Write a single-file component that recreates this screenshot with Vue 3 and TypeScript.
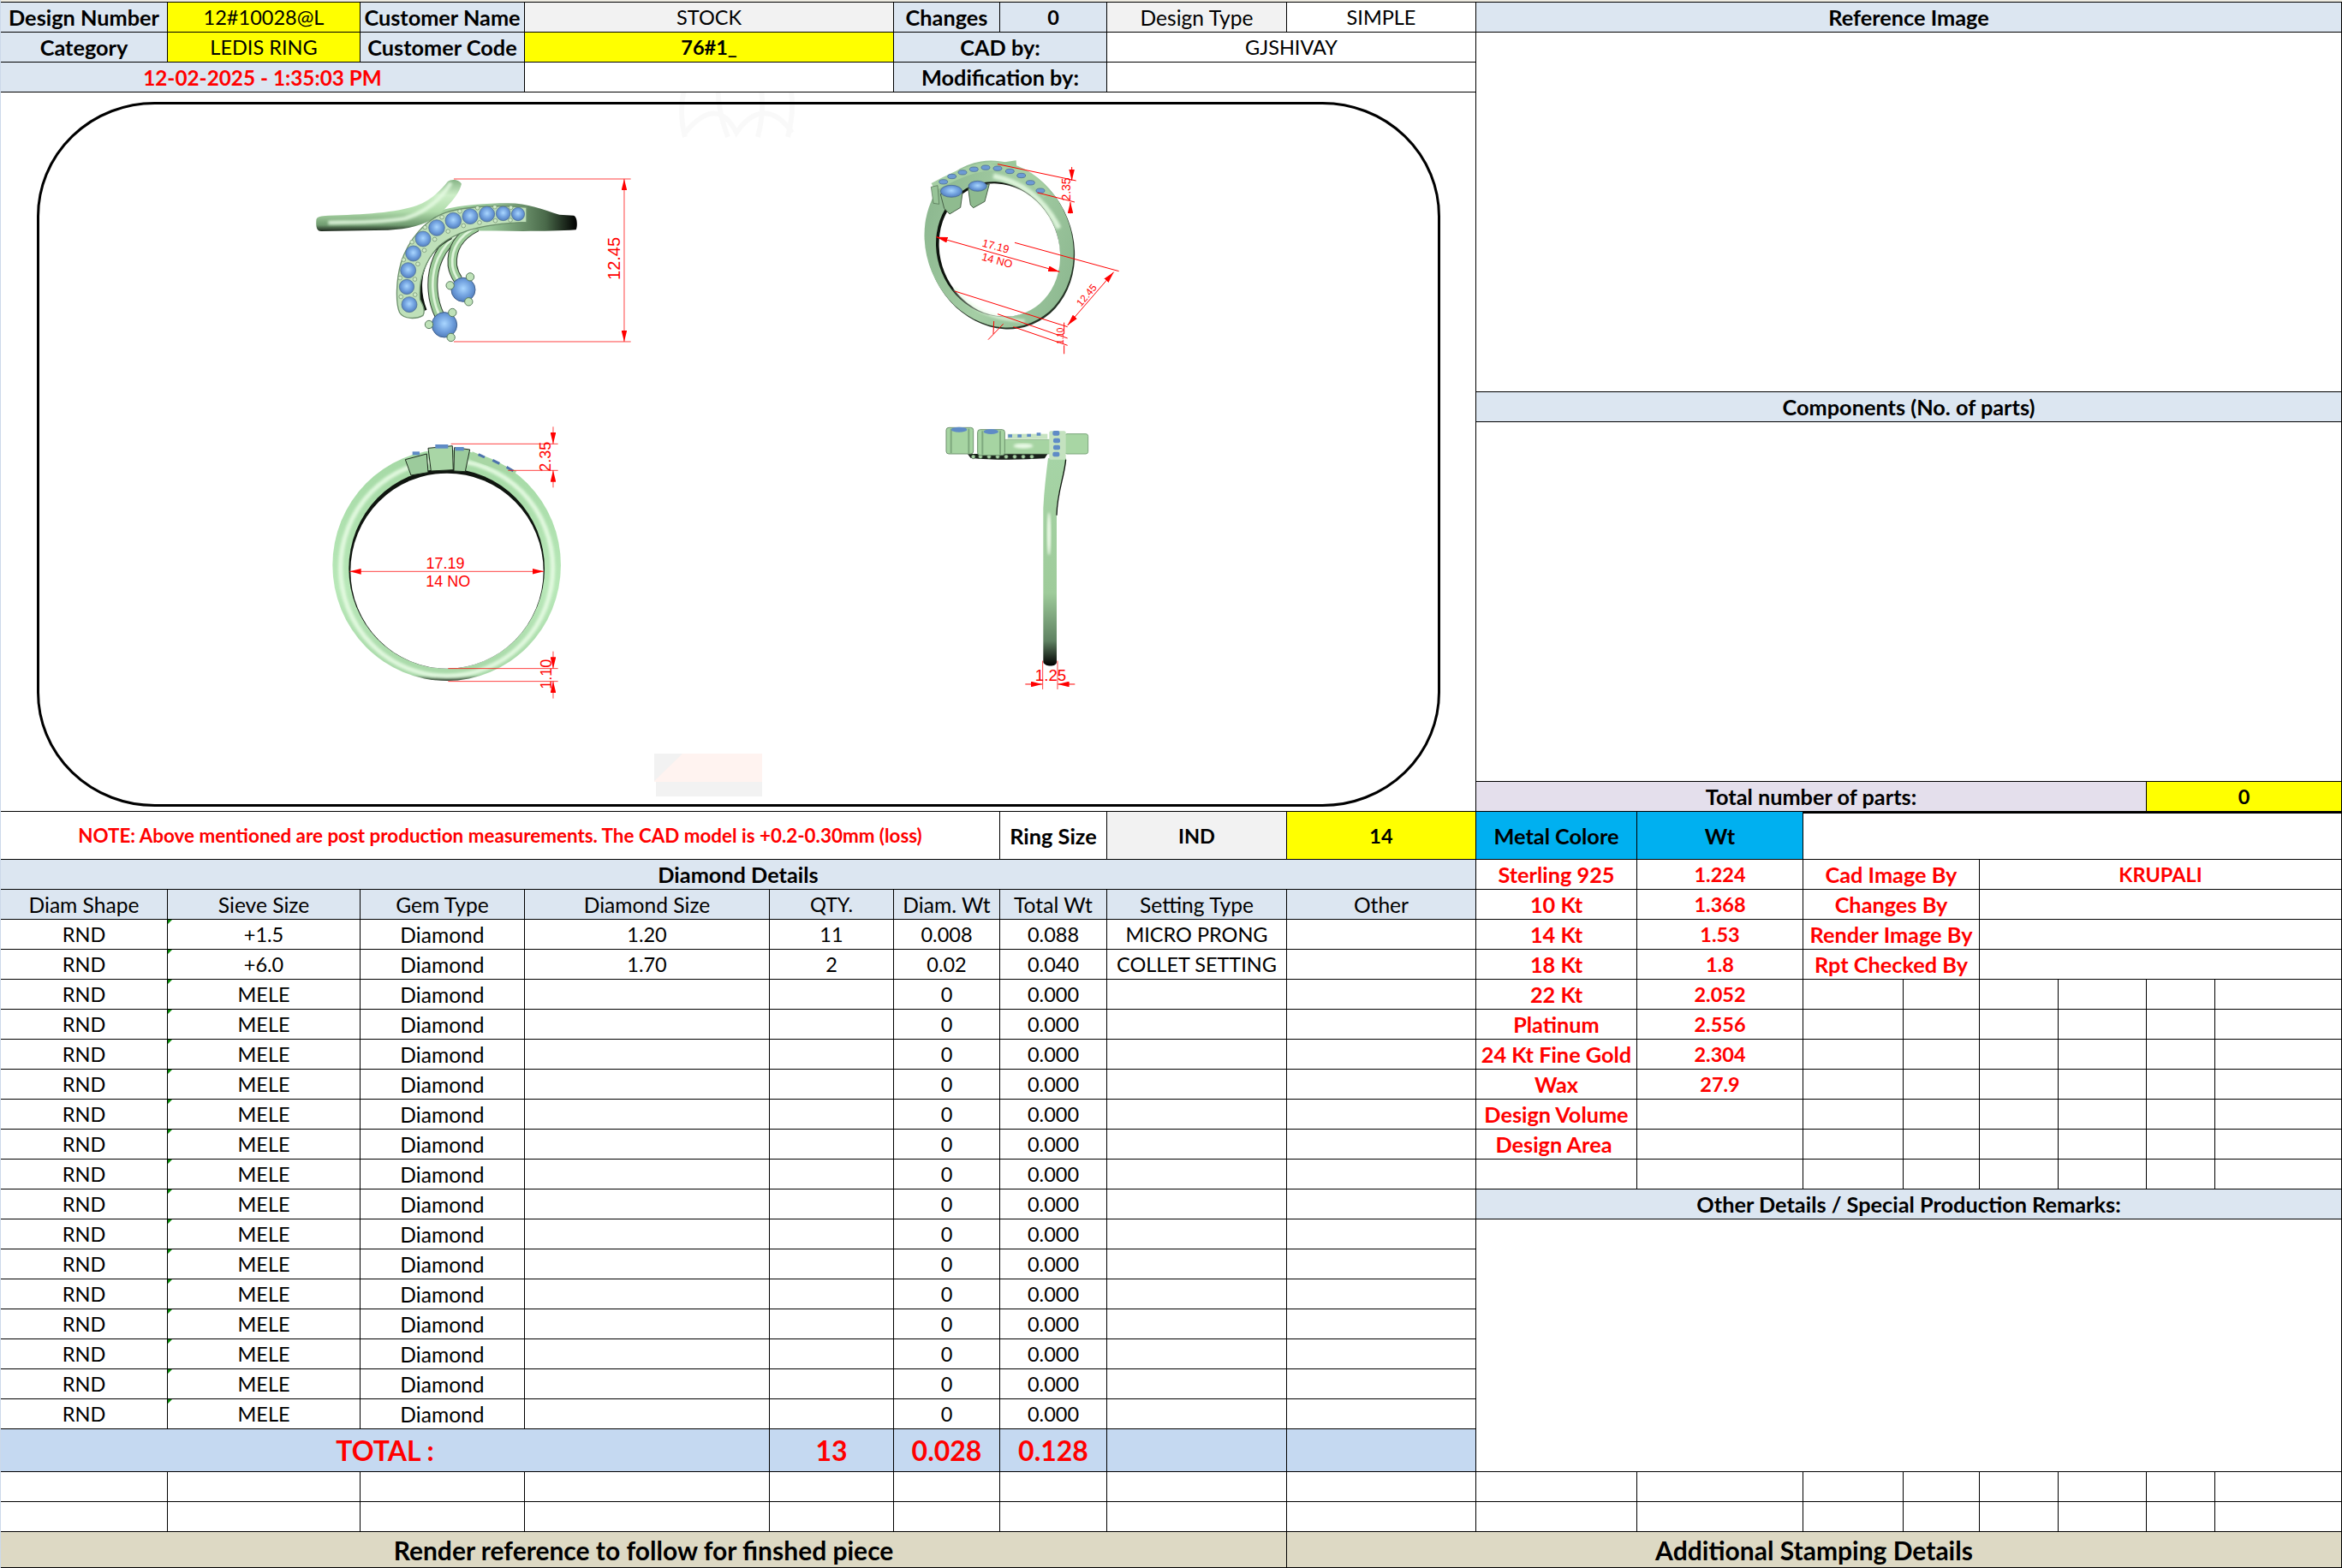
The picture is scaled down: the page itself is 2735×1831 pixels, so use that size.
<script setup lang="ts">
import { computed } from 'vue'

type Cell = { t?: string; col: number; row: number; c?: number; r?: number; k?: string; mark?: boolean }

const cells: Cell[] = []
const add = (row: number, col: number, t = '', k = '', c = 1, r = 1, mark = false) => {
  cells.push({ row, col, t, k: /[a-z]/.test(t) ? `${k} lc` : k, c, r, mark })
}

// Header block
add(1, 1, 'Design Number', 'h b')
add(1, 2, '12#10028@L', 'y')
add(1, 3, 'Customer Name', 'h b')
add(1, 4, 'STOCK', 'g', 2)
add(1, 6, 'Changes', 'h b')
add(1, 7, '0', 'h b')
add(1, 8, 'Design Type', 'g')
add(1, 9, 'SIMPLE')
add(1, 10, 'Reference Image', 'h b', 8)
add(2, 1, 'Category', 'h b')
add(2, 2, 'LEDIS RING', 'y')
add(2, 3, 'Customer Code', 'h b')
add(2, 4, '76#1_', 'y b', 2)
add(2, 6, 'CAD by:', 'h b', 2)
add(2, 8, 'GJSHIVAY', '', 2)
add(2, 10, '', '', 8, 3)
add(3, 1, '12-02-2025 - 1:35:03 PM', 'h b red date', 3)
add(3, 4, '', '', 2)
add(3, 6, 'Modification by:', 'h b', 2)
add(3, 8, '', '', 2)
add(5, 10, 'Components (No. of parts)', 'h b', 8)
add(6, 10, '', '', 8)
add(7, 10, 'Total number of parts:', 'lav b', 6)
add(7, 16, '0', 'y b', 2)

// Note row
add(8, 1, 'NOTE: Above mentioned are post production measurements. The CAD model is +0.2-0.30mm (loss)', 'b red note', 6)
add(8, 7, 'Ring Size', 'b')
add(8, 8, 'IND', 'g b')
add(8, 9, '14', 'y b')
add(8, 10, 'Metal Colore', 'cyan b')
add(8, 11, 'Wt', 'cyan b')
add(8, 12, '', 'thick', 6)

// Diamond table
add(9, 1, 'Diamond Details', 'h b', 9)
;['Diam Shape', 'Sieve Size', 'Gem Type', 'Diamond Size', 'QTY.', 'Diam. Wt', 'Total Wt', 'Setting Type', 'Other'].forEach((t, i) =>
  add(10, i + 1, t, 'h')
)
const rows = [
  ['RND', '+1.5', 'Diamond', '1.20', '11', '0.008', '0.088', 'MICRO PRONG', ''],
  ['RND', '+6.0', 'Diamond', '1.70', '2', '0.02', '0.040', 'COLLET SETTING', '']
]
for (let i = 0; i < 15; i++) rows.push(['RND', 'MELE', 'Diamond', '', '', '0', '0.000', '', ''])
rows.forEach((r, ri) => r.forEach((t, ci) => add(11 + ri, ci + 1, t, '', 1, 1, ci === 1)))

add(28, 1, 'TOTAL :', 'tot', 4)
add(28, 5, '13', 'tot')
add(28, 6, '0.028', 'tot')
add(28, 7, '0.128', 'tot')
add(28, 8, '', 'totb')
add(28, 9, '', 'totb')

// Metal table
const metals = [
  ['Sterling 925', '1.224'], ['10 Kt', '1.368'], ['14 Kt', '1.53'], ['18 Kt', '1.8'], ['22 Kt', '2.052'],
  ['Platinum', '2.556'], ['24 Kt Fine Gold', '2.304'], ['Wax', '27.9'], ['Design Volume', ''], ['Design Area', ''], ['', '']
]
metals.forEach((m, i) => {
  add(9 + i, 10, m[0], m[0] === 'Design Area' ? 'b red off' : 'b red')
  add(9 + i, 11, m[1], 'b red')
})
;['Cad Image By', 'Changes By', 'Render Image By', 'Rpt Checked By'].forEach((t, i) => {
  add(9 + i, 12, t, 'b red', 2)
  add(9 + i, 14, i === 0 ? 'KRUPALI' : '', 'b red', 4)
})
for (let r = 13; r <= 19; r++) for (let c = 12; c <= 17; c++) add(r, c)
add(20, 10, 'Other Details / Special Production Remarks:', 'h b', 8)
add(21, 10, '', '', 8, 8)

for (let r = 29; r <= 30; r++) for (let c = 1; c <= 17; c++) add(r, c)
add(31, 1, 'Render reference to follow for finshed piece', 'sand', 8)
add(31, 9, 'Additional Stamping Details', 'sand', 9)

const cellPos = (x: Cell) => ({
  gridColumn: `${x.col} / span ${x.c}`,
  gridRow: `${x.row} / span ${x.r}`
})

// Stones along the pave arm of the top-left view
const pave = [
  [795, 210, 23], [743, 208, 25], [686, 210, 27], [627, 218, 27], [568, 233, 28], [510, 258, 28],
  [462, 297, 27], [428, 348, 27], [410, 407, 27], [405, 465, 26], [414, 527, 27]
]
const paveProngs = computed(() => {
  const out: number[][] = []
  for (let i = 0; i < pave.length - 1; i++) {
    const [x1, y1, r1] = pave[i]
    const [x2, y2] = pave[i + 1]
    const dx = x2 - x1
    const dy = y2 - y1
    const len = Math.hypot(dx, dy)
    const mx = (x1 + x2) / 2
    const my = (y1 + y2) / 2
    const d = r1 - 1
    out.push([mx - (dy / len) * d, my + (dx / len) * d])
    out.push([mx + (dy / len) * d, my - (dx / len) * d])
  }
  return out
})
const bigProngs = [[627, 430], [557, 460], [622, 517], [565, 555], [483, 597], [560, 642]]
const perspStones = [[185, 157], [215, 138], [252, 124], [292, 113], [333, 107], [375, 110], [418, 120], [458, 135], [490, 160], [525, 188]]
const sideDots = [170, 195, 225, 255, 285, 315, 345, 375]
const sidePave = [[460, 78], [462, 104], [462, 128], [460, 152]]
</script>

<template>
  <div class="sheet">
    <div class="grid">
      <div v-for="(x, i) in cells" :key="i" class="cell" :class="x.k" :style="cellPos(x)">
        <i v-if="x.mark" class="mark"></i>{{ x.t }}
      </div>

      <div class="cell canvas">
        <svg viewBox="1 108 1722 839" preserveAspectRatio="none">
          <defs>
            <linearGradient id="bandL" x1="0" y1="0" x2="0" y2="1">
              <stop offset="0" stop-color="#86b486" />
              <stop offset=".3" stop-color="#cdeec8" />
              <stop offset=".62" stop-color="#b0dcab" />
              <stop offset=".88" stop-color="#6f9a6f" />
              <stop offset="1" stop-color="#1c261c" />
            </linearGradient>
            <linearGradient id="bandR" x1="0" y1="0" x2="1" y2="0">
              <stop offset="0" stop-color="#a8d6a4" />
              <stop offset=".45" stop-color="#98c698" />
              <stop offset=".8" stop-color="#4a6a4a" />
              <stop offset="1" stop-color="#000" />
            </linearGradient>
            <radialGradient id="stone" cx=".5" cy=".45" r=".6">
              <stop offset="0" stop-color="#a9d6ff" />
              <stop offset=".55" stop-color="#6f9fdd" />
              <stop offset="1" stop-color="#4c76b4" />
            </radialGradient>
            <linearGradient id="tilt" x1="0" y1="0" x2="1" y2="1">
              <stop offset="0" stop-color="#84b088" />
              <stop offset=".5" stop-color="#a5cea5" />
              <stop offset="1" stop-color="#86b28a" />
            </linearGradient>
            <linearGradient id="front" x1="0" y1="0" x2="0" y2="1">
              <stop offset="0" stop-color="#a4d8a4" />
              <stop offset=".6" stop-color="#b8e8b8" />
              <stop offset=".975" stop-color="#a8d8a8" />
              <stop offset="1" stop-color="#2e3e2e" />
            </linearGradient>
            <linearGradient id="stem" x1="0" y1="0" x2="0" y2="1">
              <stop offset="0" stop-color="#a6d4a6" />
              <stop offset=".65" stop-color="#9ecb9a" />
              <stop offset=".88" stop-color="#5f8262" />
              <stop offset="1" stop-color="#000" />
            </linearGradient>
            <filter id="soft"><feGaussianBlur stdDeviation="5" /></filter>
            <marker id="arr" markerUnits="userSpaceOnUse" markerWidth="40" markerHeight="20" refX="40" refY="10" orient="auto-start-reverse">
              <path d="M0 0 L40 10 L0 20 Z" fill="#f00" />
            </marker>
          </defs>

          <!-- faint print-through from the source sheet -->
          <g opacity=".025" fill="none" stroke="#333" stroke-width="6">
            <path d="M800 160 C790 120 800 85 820 75 M850 160 C835 120 835 90 850 75 M920 160 C930 120 925 85 905 75 M885 160 C895 120 890 90 875 75" />
            <path d="M800 155 C825 125 845 125 860 155 C880 125 905 125 925 155" />
          </g>
          <rect x="764" y="880" width="126" height="33" fill="#fff3f0" />
          <rect x="766" y="913" width="124" height="17" fill="#f2f2f2" />
          <path d="M764 880 H797 L764 912 Z" fill="#f2f2f2" />

          <rect class="frame" x="44.5" y="120.5" width="1636" height="820" rx="136" ry="132" />

          <!-- top-left view -->
          <g transform="translate(340 180) scale(.3333)">
            <path d="M530 195 C600 178 680 172 760 172 C830 172 880 195 940 212 L990 215 C1003 218 1004 255 998 265 C900 272 760 270 620 268 L450 268 Z" fill="url(#bandR)" />
            <path d="M88 232 C88 220 100 216 130 215 C250 212 370 205 440 180 C490 162 525 125 548 97 C560 85 590 88 597 104 C590 135 565 165 535 195 C495 240 430 262 340 266 L105 270 C92 270 86 260 88 232 Z" fill="url(#bandL)" />
            <path d="M560 100 C530 150 480 200 400 225 C320 240 220 238 130 240" class="hi" stroke-width="14" />
            <g fill="none">
              <path d="M590 278 C520 320 490 400 497 480 C500 520 510 545 520 565" stroke="#2b3a2b" stroke-width="36" />
              <path d="M590 278 C520 320 490 400 497 480 C500 520 510 545 520 565" stroke="#9ccb99" stroke-width="30" />
              <path d="M590 278 C520 320 490 400 497 480 C500 520 510 545 520 565" stroke="#def4da" stroke-width="8" />
              <path d="M650 255 C590 285 560 330 565 390 C568 410 575 425 585 440" stroke="#2b3a2b" stroke-width="34" />
              <path d="M650 255 C590 285 560 330 565 390 C568 410 575 425 585 440" stroke="#9ccb99" stroke-width="28" />
              <path d="M650 255 C590 285 560 330 565 390 C568 410 575 425 585 440" stroke="#def4da" stroke-width="8" />
              <path d="M468 548 C445 490 440 410 490 345 C510 320 530 305 560 290" stroke="#0c120c" stroke-width="16" />
            </g>
            <path d="M825 186 C740 180 620 180 540 205 C470 230 410 300 385 380 C368 440 365 520 380 555 C395 580 440 578 462 565 C472 545 460 525 452 510 C445 440 470 370 520 320 C570 280 640 245 825 238 Z" fill="#bfe0b9" stroke="#6d916d" stroke-width="4" />
            <circle v-for="(s, i) in pave" :key="'s' + i" :cx="s[0]" :cy="s[1]" :r="s[2]" fill="url(#stone)" stroke="#47688f" stroke-width="2" />
            <circle v-for="(p, i) in paveProngs" :key="'p' + i" :cx="p[0]" :cy="p[1]" r="7" fill="#cfeac8" stroke="#6a8a6a" stroke-width="2" />
            <circle cx="603" cy="475" r="42" fill="url(#stone)" stroke="#3f5f8c" stroke-width="3" />
            <circle cx="537" cy="598" r="44" fill="url(#stone)" stroke="#3f5f8c" stroke-width="3" />
            <circle v-for="(p, i) in bigProngs" :key="'b' + i" :cx="p[0]" :cy="p[1]" r="14" fill="#bfe2b9" stroke="#55795a" stroke-width="3" />
            <g class="dim soft">
              <path d="M570 87 H1190 M570 657 H1190" />
              <path d="M1167 87 V657" marker-start="url(#arr)" marker-end="url(#arr)" />
            </g>
            <text class="dt" transform="translate(1153 366) rotate(-90)" text-anchor="middle" font-size="60">12.45</text>
          </g>

          <!-- top-right view -->
          <g transform="translate(1040 160) scale(.3333)">
            <ellipse cx="384" cy="381" rx="255" ry="298" transform="rotate(-22 384 381)" fill="#263326" />
            <ellipse cx="380" cy="375" rx="255" ry="298" transform="rotate(-22 380 375)" fill="url(#tilt)" />
            <ellipse cx="376" cy="393" rx="213" ry="240" transform="rotate(-22 376 393)" fill="#0e140e" />
            <ellipse cx="382" cy="396" rx="208" ry="237" transform="rotate(-22 382 396)" fill="#fff" />
            <path d="M360 136 C470 160 545 230 590 320" class="hi" stroke-width="18" />
            <path d="M225 530 C280 610 370 640 470 645" class="hi" stroke-width="10" />
            <path d="M150 175 C250 120 340 85 420 110 C470 125 520 160 548 205" fill="none" stroke="#a6cfa4" stroke-width="30" />
            <path d="M350 95 L440 82 L442 110 Z" fill="#9cc89a" />
            <ellipse v-for="(s, i) in perspStones" :key="'ps' + i" :cx="s[0]" :cy="s[1]" rx="15" ry="8" fill="#6d9bd4" stroke="#3f5f8c" stroke-width="2" />
            <path d="M142 175 L165 170 L170 235 L150 232 Z" fill="#98c498" stroke="#4b6a4b" stroke-width="2" />
            <path d="M175 200 L188 250 L207 270 L245 247 L252 195 Z" fill="#8fbb8f" stroke="#475f47" stroke-width="3" />
            <path d="M272 180 L280 238 L290 248 L330 226 L346 165 Z" fill="#8fbb8f" stroke="#475f47" stroke-width="3" />
            <ellipse cx="213" cy="190" rx="38" ry="21" fill="url(#stone)" stroke="#3f5f8c" stroke-width="2" />
            <ellipse cx="305" cy="172" rx="32" ry="18" fill="url(#stone)" stroke="#3f5f8c" stroke-width="2" />
            <g class="dim">
              <path d="M375 95 L650 153 M515 195 L645 228" />
              <path d="M635 105 V153" marker-end="url(#arr)" />
              <path d="M630 268 V228" marker-end="url(#arr)" />
              <path d="M160 350 L592 472" marker-start="url(#arr)" marker-end="url(#arr)" />
              <path d="M435 370 L800 470 M225 540 L620 665 M375 620 L620 705 M430 665 L620 730" />
              <path d="M782 473 L620 660" marker-start="url(#arr)" marker-end="url(#arr)" />
              <path d="M342 710 L395 655 M362 645 L360 690" />
              <path d="M608 650 V690 M608 760 V730" />
            </g>
            <text class="dt" transform="translate(630 183) rotate(-90)" text-anchor="middle" font-size="42">2.35</text>
            <text class="dt" transform="translate(365 395) rotate(15)" text-anchor="middle" font-size="38">17.19</text>
            <text class="dt" transform="translate(370 445) rotate(15)" text-anchor="middle" font-size="38">14 NO</text>
            <text class="dt" transform="translate(696 562) rotate(-50)" text-anchor="middle" font-size="35">12.45</text>
            <text class="dt" transform="translate(605 697) rotate(-90)" text-anchor="middle" font-size="30">1.10</text>
          </g>

          <!-- bottom-left view -->
          <g transform="translate(360 490) scale(.3333)">
            <ellipse cx="485" cy="510" rx="400" ry="405" fill="url(#front)" />
            <ellipse cx="485" cy="520" rx="372" ry="378" fill="none" stroke="#e6fbe3" stroke-width="16" filter="url(#soft)" opacity=".9" />
            <ellipse cx="485" cy="522" rx="343" ry="350" fill="#0f150f" />
            <ellipse cx="486" cy="530" rx="338" ry="342" fill="#fff" />
            <path d="M340 140 L415 120 L420 185 L360 195 Z" fill="#9ccb9c" stroke="#1d2a1d" stroke-width="3" />
            <path d="M420 100 L505 92 L508 176 L430 180 Z" fill="#a9d6a6" stroke="#1d2a1d" stroke-width="3" />
            <path d="M512 98 L566 105 L550 182 L510 180 Z" fill="#9ccb9c" stroke="#1d2a1d" stroke-width="3" />
            <rect x="445" y="87" width="45" height="14" fill="#5f8bc6" />
            <rect x="515" y="96" width="30" height="13" fill="#5f8bc6" />
            <rect x="365" y="112" width="25" height="12" fill="#5f8bc6" />
            <path d="M575 112 L730 180 L720 195 L570 140 Z" fill="#a8d6a4" />
            <path d="M598 118 L620 128 L616 136 L594 126 Z M648 138 L672 150 L668 158 L644 146 Z M697 162 L720 176 L716 184 L693 170 Z" fill="#4d73ad" />
            <g class="dim soft">
              <path d="M500 85 H875 M700 178 H875" />
              <path d="M490 872 H875 M490 917 H875" />
              <path d="M145 532 H825" marker-start="url(#arr)" marker-end="url(#arr)" />
              <path d="M858 25 V85" marker-end="url(#arr)" />
              <path d="M858 238 V178" marker-end="url(#arr)" />
              <path d="M858 812 V872" marker-end="url(#arr)" />
              <path d="M858 977 V917" marker-end="url(#arr)" />
            </g>
            <text class="dt" transform="translate(850 130) rotate(-90)" text-anchor="middle" font-size="54">2.35</text>
            <text class="dt" x="480" y="522" text-anchor="middle" font-size="54">17.19</text>
            <text class="dt" x="490" y="586" text-anchor="middle" font-size="54">14 NO</text>
            <text class="dt" transform="translate(852 892) rotate(-90)" text-anchor="middle" font-size="54">1.10</text>
          </g>

          <!-- bottom-right view -->
          <g transform="translate(1080 480) scale(.3333)">
            <path d="M150 150 H430 L420 166 C330 172 230 172 160 164 Z" fill="#1a221a" />
            <circle v-for="d in sideDots" :key="d" :cx="d" cy="160" r="7" fill="#a7d1a4" stroke="#3a4e3a" stroke-width="2" />
            <rect x="490" y="80" width="82" height="70" rx="8" fill="#a8d6a4" stroke="#7ba67b" stroke-width="3" />
            <path d="M415 880 L415 340 C418 280 425 220 432 165 L495 165 C490 230 462 280 462 370 L462 880 C462 897 420 897 415 880 Z" fill="url(#stem)" />
            <path d="M494 170 C488 235 464 282 462 365" fill="none" stroke="#10160f" stroke-width="4" />
            <ellipse cx="435" cy="430" rx="7" ry="75" fill="#eefbe9" filter="url(#soft)" />
            <path d="M278 100 H440 V150 H278 Z" fill="#a6d4a2" stroke="#7ba67b" stroke-width="2" />
            <ellipse cx="345" cy="122" rx="34" ry="9" fill="#e9fae6" filter="url(#soft)" />
            <rect x="75" y="58" width="95" height="92" rx="9" fill="#a6d4a2" stroke="#6d926d" stroke-width="3" />
            <rect x="185" y="65" width="95" height="90" rx="9" fill="#a6d4a2" stroke="#6d926d" stroke-width="3" />
            <path d="M92 62 V148 M154 62 V148 M202 70 V152 M264 70 V152" stroke="#7fa97f" stroke-width="6" />
            <ellipse cx="120" cy="65" rx="28" ry="9" fill="#5f8bc6" />
            <ellipse cx="232" cy="72" rx="26" ry="9" fill="#5f8bc6" />
            <rect x="290" y="80" width="140" height="18" fill="#c7e3c1" />
            <path d="M292 82 h14 v10 h-14 Z M325 82 h14 v10 h-14 Z M358 80 h14 v10 h-14 Z M392 76 h14 v10 h-14 Z" fill="#5f8bc6" />
            <rect x="436" y="70" width="58" height="100" rx="6" fill="#c4e2bf" />
            <rect v-for="(s, i) in sidePave" :key="'sp' + i" :x="s[0] - 12" :y="s[1] - 9" width="24" height="17" rx="6" fill="#5f8bc6" />
            <g class="dim soft">
              <path d="M413 875 V975 M465 875 V975" />
            </g>
            <g class="dim">
              <path d="M352 957 H412" marker-end="url(#arr)" />
              <path d="M526 957 H466" marker-end="url(#arr)" />
            </g>
            <text class="dt" x="441" y="946" text-anchor="middle" font-size="56">1.25</text>
          </g>
        </svg>
      </div>
    </div>
  </div>
</template>

<style>
html, body { margin: 0; background: #fff; }
</style>

<style scoped>
.sheet {
  width: 2735px;
  height: 1831px;
  box-sizing: border-box;
  border-left: 1px solid #ccd9ea;
  background: #fff;
  overflow: hidden;
  font-family: Lato, "Open Sans", sans-serif;
  font-size: 23.5px;
  color: #000;
}
.sheet::before {
  content: "";
  display: block;
  height: 2px;
  background: #efece2;
}
.grid {
  display: grid;
  border-top: 1px solid #000;
  grid-template-columns: 195px 225px 192px 286px 145px 124px 125px 210px 221px 188px 194px 117px 89px 92px 103px 80px 148px;
  grid-template-rows: repeat(3, 35px) 350px 35px 420px 35px 56px repeat(19, 35px) 50px 35px 35px 42px;
}
.cell {
  position: relative;
  display: flex;
  align-items: center;
  justify-content: center;
  box-sizing: border-box;
  min-width: 0;
  min-height: 0;
  border-right: 1px solid #000;
  border-bottom: 1px solid #000;
  white-space: nowrap;
  text-align: center;
}
.canvas {
  grid-column: 1 / span 9;
  grid-row: 4 / span 4;
  overflow: hidden;
}
.canvas svg {
  display: block;
  width: 100%;
  height: 100%;
}
.h { background: #dce6f1; }
.b { font-weight: 700; }
.y { background: #ffff00; }
.g { background: #f2f2f2; }
.lav { background: #e4dfec; }
.cyan { background: #00b0f0; }
.red { color: #ff0000; }
.lc { font-size: 24.6px; }
.b.lc { font-size: 25.3px; }
.cell.date { font-size: 24.3px; }
.cell.note { font-size: 22.4px; }
.off { padding-right: 6px; }
.thick { border-top: 2px solid #000; }
.tot, .totb { background: #c5d9f1; }
.tot { color: #ff0000; font-weight: 700; font-size: 32px; }
.cell.sand { background: #ddd9c4; font-weight: 700; font-size: 30px; }
.mark {
  position: absolute;
  top: 0;
  left: 0;
  width: 0;
  height: 0;
  border-top: 5px solid #0a8a0a;
  border-right: 5px solid transparent;
}
.frame { fill: none; stroke: #000; stroke-width: 3; }
.hi { fill: none; stroke: #e6fbe3; opacity: .85; filter: url(#soft); }
.dim { fill: none; stroke: #f00; stroke-width: 3; }
.soft { stroke-opacity: .75; }
.dt { fill: #f00; font-family: "Liberation Sans", Arial, sans-serif; }
</style>
